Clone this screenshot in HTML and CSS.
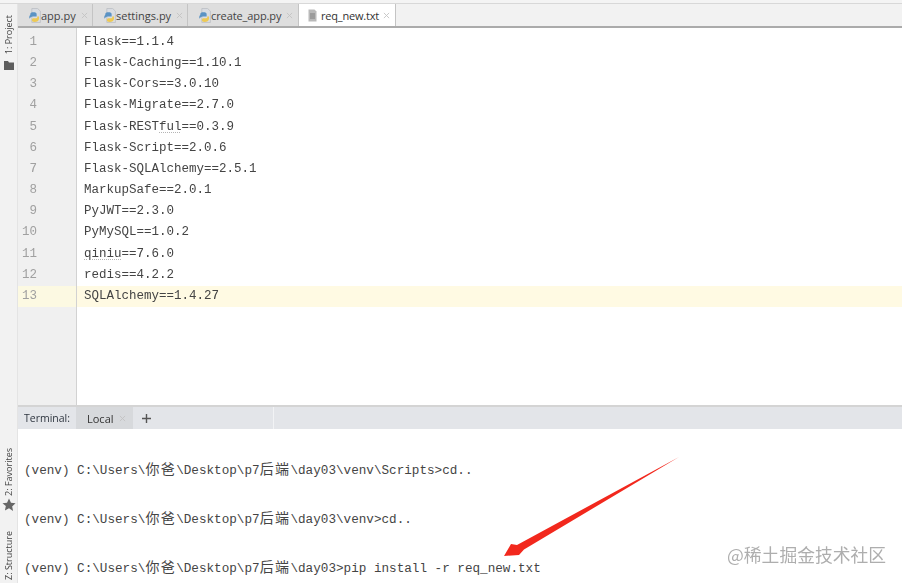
FILE: index.html
```html
<!DOCTYPE html>
<html lang="zh">
<head>
<meta charset="utf-8">
<title>req_new.txt</title>
<link rel="stylesheet" href="styles.css">
</head>
<body>
<svg class="defs" width="0" height="0" aria-hidden="true">
  <symbol id="py" viewBox="0 0 12 14">
    <path d="M3.500 .5h5.500l2.500 2.500v10.500H3.500z" fill="#dadde2" stroke="#b9bcc1" stroke-width=".7"/>
    <path d="M2 6.500C2 4.500 3 4 5 4s3 .4 3 2v2H4.500C3 8 2 9 1.500 10 .8 9 1 7 2 6.500z" fill="#5b93c4"/>
    <path d="M9 7.500c1 0 1.500 1 1.200 2.500-.3 2-1.700 3-4 3-1.800 0-2.700-.6-2.700-2 0-1 .8-1.500 2-1.500h2.200C8.500 9.500 8.700 8.500 9 7.500z" fill="#edc955"/>
  </symbol>
  <symbol id="x" viewBox="0 0 8 8">
    <path d="M1 1l6 6M7 1L1 7" stroke="#c2c2c2" stroke-width="1" fill="none"/>
  </symbol>
</svg>
<div class="window">
  <div class="top-strip"></div>
  <div class="body">
    <aside class="rail">
      <div class="rail-top">
        <span class="rail-label">1: Project</span>
        <svg class="rail-icon" viewBox="0 0 12 11" width="12" height="11"><path d="M1 1h4l1 1.500h5V10H1z" fill="#5e5e5e"/></svg>
      </div>
      <div class="rail-bottom">
        <span class="rail-label">2: Favorites</span>
        <svg class="rail-icon star" viewBox="0 0 12 12" width="14" height="14"><path d="M6 .5l1.700 3.600 3.900.5-2.900 2.700.8 3.900L6 8.800 2.500 10.700l.8-3.900L.4 4.600l3.900-.5z" fill="#666"/></svg>
        <span class="rail-label structure">Z: Structure</span>
      </div>
    </aside>
    <main class="main">
      <nav class="tabs">
        <div class="tab tab-app"><svg class="file" width="13" height="15"><use href="#py"/></svg><span>app.py</span><svg class="close" width="7" height="7"><use href="#x"/></svg></div>
        <div class="tab tab-settings"><svg class="file" width="13" height="15"><use href="#py"/></svg><span>settings.py</span><svg class="close" width="7" height="7"><use href="#x"/></svg></div>
        <div class="tab tab-create"><svg class="file" width="13" height="15"><use href="#py"/></svg><span>create_app.py</span><svg class="close" width="7" height="7"><use href="#x"/></svg></div>
        <div class="tab tab-req active">
          <svg class="file txt" viewBox="0 0 9 13" width="9" height="13"><path d="M.5.5h6l2 2v10H.5z" fill="#b9b9b9"/><path d="M2 5h5M2 7h5M2 9h5" stroke="#6e6e6e" stroke-width=".8"/></svg>
          <span>req_new.txt</span><svg class="close" width="7" height="7"><use href="#x"/></svg>
        </div>
      </nav>
      <section class="editor">
        <div class="gutter">
          <div class="num">1</div><div class="num">2</div><div class="num">3</div><div class="num">4</div><div class="num">5</div><div class="num">6</div><div class="num">7</div><div class="num">8</div><div class="num">9</div><div class="num">10</div><div class="num">11</div><div class="num">12</div><div class="num current">13</div>
        </div>
        <div class="code">
          <div class="line">Flask==1.1.4</div>
          <div class="line">Flask-Caching==1.10.1</div>
          <div class="line">Flask-Cors==3.0.10</div>
          <div class="line">Flask-Migrate==2.7.0</div>
          <div class="line">Flask-REST<span class="typo">ful</span>==0.3.9</div>
          <div class="line">Flask-Script==2.0.6</div>
          <div class="line">Flask-SQLAlchemy==2.5.1</div>
          <div class="line">MarkupSafe==2.0.1</div>
          <div class="line">PyJWT==2.3.0</div>
          <div class="line">PyMySQL==1.0.2</div>
          <div class="line"><span class="typo">qiniu</span>==7.6.0</div>
          <div class="line">redis==4.2.2</div>
          <div class="line current">SQLAlchemy==1.4.27</div>
        </div>
      </section>
      <div class="term-head">
        <span class="term-title">Terminal:</span>
        <div class="term-tab"><span>Local</span><svg class="close" width="7" height="7"><use href="#x"/></svg></div>
        <svg class="plus" viewBox="0 0 9 9" width="9" height="9"><path d="M4.500 0v9M0 4.500h9" stroke="#555" stroke-width="1.400"/></svg>
        <span class="term-sep"></span>
      </div>
      <section class="terminal">
        <div class="term-line">(venv) C:\Users\<span class="cjk">你爸</span>\Desktop\p7<span class="cjk">后端</span>\day03\venv\Scripts&gt;cd..</div>
        <div class="term-line">(venv) C:\Users\<span class="cjk">你爸</span>\Desktop\p7<span class="cjk">后端</span>\day03\venv&gt;cd..</div>
        <div class="term-line">(venv) C:\Users\<span class="cjk">你爸</span>\Desktop\p7<span class="cjk">后端</span>\day03&gt;pip install -r req_new.txt</div>
      </section>
    </main>
  </div>
</div>
<svg class="arrow" viewBox="0 0 905 583" width="905" height="583" aria-hidden="true">
  <path d="M679 457L524 549.500L519 555L504 556L511 544L517 545Z" fill="#f2281d"/>
</svg>
<div class="watermark">@稀土掘金技术社区</div>
</body>
</html>
```

FILE: styles.css
```css
* { box-sizing: border-box; }
html, body { margin: 0; height: 583px; overflow: hidden; background: #fff; }
body { position: relative; font-family: "Open Sans", "Noto Sans", sans-serif; color: #333; }
.defs { position: absolute; }

.window { width: 902px; height: 583px; display: flex; flex-direction: column; filter: blur(.3px); }
.top-strip { height: 4px; background: #f4f4f4; border-bottom: 1px solid #d8d8d8; flex: none; }
.body { flex: 1; display: flex; min-height: 0; }

.rail { width: 18px; flex: none; background: #f2f2f2; display: flex; flex-direction: column; justify-content: space-between; align-items: center; border-right: 1px solid #e4e4e4; }
.rail-top { display: flex; flex-direction: column; align-items: center; padding-top: 11px; gap: 6px; }
.rail-bottom { display: flex; flex-direction: column; align-items: center; }
.rail-label { writing-mode: vertical-rl; transform: rotate(180deg); font-size: 9px; line-height: 12px; color: #444; white-space: nowrap; }
.star { margin-top: 2px; }
.structure { margin-top: 19px; margin-bottom: 3px; }

.main { flex: 1; min-width: 0; display: flex; flex-direction: column; }
.tabs { height: 24px; flex: none; display: flex; background: #f2f2f2; border-bottom: 2px solid #ababab; }
.tab { height: 22px; display: flex; align-items: center; background: #dedede; border-right: 1px solid #c4c4c4; font-size: 11px; color: #444; padding-left: 10px; }
.tab .file { flex: none; }
.tab .close { margin-left: 5px; flex: none; }
.tab-app { width: 75px; }
.tab-settings { width: 95px; }
.tab-create { width: 111px; }
.tab-create span { letter-spacing: -.1px; }
.tab-req { width: 97px; }
.tab.active { background: #fff; color: #333; padding-left: 9px; }
.tab-req span { letter-spacing: -.2px; }
.tab-req .close { margin-left: 4px; }
.tab .txt { margin-right: 4px; }

.editor { height: 378px; flex: none; display: flex; font-family: "Liberation Mono", "Noto Sans CJK SC", monospace; font-size: 12.5px; border-bottom: 1px solid #d4d4d4; }
.gutter { width: 59px; flex: none; background: #f0f0f0; border-right: 1px solid #d2d2d2; padding-top: 4px; }
.num { height: 21.17px; line-height: 21.17px; text-align: right; color: #a0a0a0; padding-right: 39px; }
.num.current { background: #fcf9e2; }
.code { flex: 1; padding-top: 4px; }
.line { height: 21.17px; line-height: 21.17px; padding-left: 7px; color: #444; white-space: pre; }
.line.current { background: #fffae3; }
.typo { text-decoration: underline dotted #b5b5b5 1px; text-underline-offset: 2px; }

.term-head { height: 23px; flex: none; display: flex; align-items: center; background: #e3e5e9; border-top: 1px solid #d4d4d4; font-size: 11px; color: #333; }
.term-title { width: 58px; padding-left: 6px; color: #2f3640; font-size: 10.500px; }
.term-tab { width: 57px; height: 100%; display: flex; align-items: center; padding-left: 11px; background: #d7d9dc; }
.term-tab .close { margin-left: 5px; }
.plus { margin-left: 9px; }
.term-sep { width: 1px; height: 100%; background: #f2f3f5; margin-left: 122px; }

.terminal { flex: 1; background: #fff; padding-top: 15px; font-family: "Liberation Mono", monospace; font-size: 12.650px; color: #444; }
.term-line { height: 49px; line-height: 49px; padding-left: 6px; white-space: pre; }
.cjk { font-family: "Noto Sans CJK SC", sans-serif; font-size: 14px; letter-spacing: 1.400px; }

.arrow { position: absolute; left: 0; top: 0; pointer-events: none; }
.watermark { position: absolute; left: 727px; top: 542px; font-family: "Noto Sans CJK SC", sans-serif; font-size: 17.800px; line-height: 24px; color: #aeaeae; white-space: nowrap; }
```
